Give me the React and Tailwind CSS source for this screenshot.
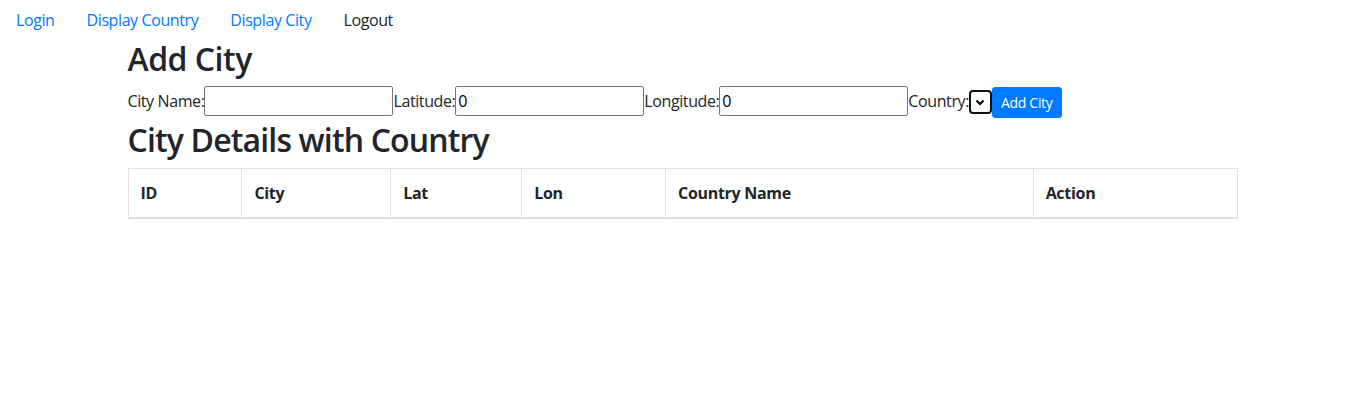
import React from 'react';

const Field = ({ label, value, width }) => (
  <>
    <label className="text-[16px] leading-[24px] tracking-[-0.4px]">{label}</label>
    <input
      type="text"
      defaultValue={value}
      className={`h-[30px] ${width} border border-[#767676] rounded-[2px] px-[2px] text-[16px] text-black bg-white`}
    />
  </>
);

const App = () => {
  return (
    <div className="min-h-screen bg-white text-[#212529] font-['Open_Sans',sans-serif]">
      <nav className="flex items-center text-[16px] leading-[24px] tracking-[-0.4px]">
        <a href="#" className="px-4 py-2 text-[#007bff]">Login</a>
        <a href="#" className="px-4 py-2 text-[#007bff]">Display Country</a>
        <a href="#" className="px-4 py-2 text-[#007bff]">Display City</a>
        <a href="#" className="px-4 py-2 text-[#212529]">Logout</a>
      </nav>

      <div className="mx-auto max-w-[1140px] pl-[16px] pr-[14px]">
        <h2 className="text-[32px] font-semibold leading-[1.2] mb-2 tracking-[-0.5px]">Add City</h2>

        <form className="flex items-baseline">
          <Field label="City Name:" value="" width="w-[189px]" />
          <Field label="Latitude:" value="0" width="w-[189px]" />
          <Field label="Longitude:" value="0" width="w-[189px]" />
          <label className="text-[16px] leading-[24px] tracking-[-0.4px]">Country:</label>
          <div className="self-center mt-[1px] w-[23px] h-[24px] border-2 border-[#101010] rounded-[4px] flex items-center justify-center">
            <svg width="10" height="7" viewBox="0 0 10 7">
              <path d="M1.5 1.5 L5 5 L8.5 1.5" fill="none" stroke="#000" strokeWidth="2" />
            </svg>
          </div>
          <button
            type="button"
            className="self-end translate-y-[1px] bg-[#007bff] text-white text-[14px] leading-[21px] px-2 py-1 border border-[#007bff] rounded-[3px] tracking-[-0.3px]"
          >
            Add City
          </button>
        </form>

        <h2 className="text-[32px] font-semibold leading-[1.2] mb-2 mt-[4px] tracking-[-0.85px]">City Details with Country</h2>

        <table className="w-full border-collapse border border-[#dee2e6] text-[16px] leading-[24px]">
          <thead>
            <tr className="text-left">
              <th className="w-[114px] p-3 border border-[#dee2e6] border-b-2 font-bold tracking-[-0.3px]">ID</th>
              <th className="w-[149px] p-3 border border-[#dee2e6] border-b-2 font-bold tracking-[-0.3px]">City</th>
              <th className="w-[131px] p-3 border border-[#dee2e6] border-b-2 font-bold tracking-[-0.3px]">Lat</th>
              <th className="w-[144px] p-3 border border-[#dee2e6] border-b-2 font-bold tracking-[-0.3px]">Lon</th>
              <th className="w-[368px] p-3 border border-[#dee2e6] border-b-2 font-bold tracking-[-0.3px]">Country Name</th>
              <th className="w-[204px] p-3 border border-[#dee2e6] border-b-2 font-bold tracking-[-0.3px]">Action</th>
            </tr>
          </thead>
          <tbody></tbody>
        </table>
      </div>
    </div>
  );
};

export default App;
